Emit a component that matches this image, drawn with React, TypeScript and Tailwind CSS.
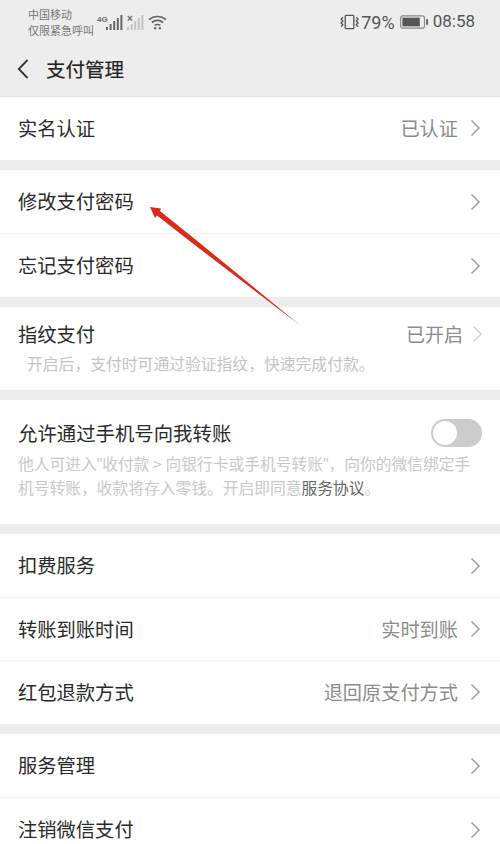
import React from "react";

const Chevron = ({ light = false }: { light?: boolean }) => (
  <svg width="11" height="18" viewBox="0 0 11 18" fill="none" className="shrink-0">
    <path d="M1.5 1.5 L9 9 L1.5 16.5" stroke={light ? "#d4d4d4" : "#a3a3a3"} strokeWidth="1.6" />
  </svg>
);

const Row = ({ label, value, h = "h-[63px]", border = false }: { label: string; value?: string; h?: string; border?: boolean }) => (
  <div className={`${h} flex items-center justify-between pl-[18px] pr-[19px] bg-white ${border ? "border-b border-[#f3f3f3]" : ""}`}>
    <span className="text-[19.3px] text-[#2a2a2a]">{label}</span>
    <span className="flex items-center gap-[12px]">
      {value && <span className="text-[19.2px] text-[#8c8c8c]">{value}</span>}
      <Chevron />
    </span>
  </div>
);

const Bars = ({ dim = false }: { dim?: boolean }) => (
  <svg width="18" height="15" viewBox="0 0 18 15">
    {[3, 6, 9, 12, 15].map((b, i) => (
      <rect key={i} x={i * 3.6} y={15 - b} width="2" height={b} fill={dim ? "#c4c4c4" : "#666"} />
    ))}
  </svg>
);

export default function App() {
  return (
    <div className="relative w-[500px] h-[844px] overflow-hidden bg-[#ededed] font-['Noto_Sans_CJK_SC','Noto_Sans',sans-serif]">
      <div className="h-[44px] flex items-center justify-between pl-[28px] pr-[25px] text-[#666]">
        <div className="flex items-center">
          <div className="text-[11px] leading-[16px] text-[#777] w-[69px] whitespace-nowrap">
            <div>中国移动</div>
            <div>仅限紧急呼叫</div>
          </div>
          <div className="flex items-end">
            <span className="w-[9px] text-[8px] font-bold leading-none self-start mt-[1px] font-['Liberation_Sans',sans-serif]">4G</span>
            <Bars />
          </div>
          <div className="relative ml-[3px] flex items-end">
            <span className="absolute left-0 -top-[1px] text-[10px] font-bold leading-none text-[#666] font-['Liberation_Sans',sans-serif]">×</span>
            <Bars dim />
          </div>
          <svg width="19" height="15" viewBox="0 0 20 16" fill="none" className="ml-[3px]" stroke="#666" strokeWidth="1.8">
            <path d="M1 5 C6 0.5 14 0.5 19 5" />
            <path d="M4 8 C7.5 5 12.5 5 16 8" />
            <path d="M7 11 C8.5 9.8 11.5 9.8 13 11" />
            <circle cx="7.5" cy="14" r="1.3" fill="#666" stroke="none" />
            <circle cx="12.5" cy="14" r="1.3" fill="#666" stroke="none" />
          </svg>
        </div>
        <div className="flex items-center font-['Roboto',sans-serif] text-[18px] text-[#555]">
          <svg width="20" height="16" viewBox="0 0 21 16" fill="none" stroke="#555" strokeWidth="1.4">
            <rect x="5.5" y="1" width="9" height="14" rx="1" />
            <path d="M3 3 L1.2 5 L3 7 L1.2 9 L3 11 L1.2 13" />
            <path d="M17 3 L19 5 L17 7 L19 9 L17 11 L19 13" />
          </svg>
          <span className="ml-[1px]">79%</span>
          <svg width="29" height="14" viewBox="0 0 30 14" className="ml-[5px]">
            <rect x="0.7" y="0.7" width="24.6" height="12.6" rx="2" fill="none" stroke="#888" strokeWidth="1.2" />
            <rect x="2.5" y="2.5" width="18" height="9" fill="#555" />
            <rect x="27" y="4" width="2" height="6" fill="#666" />
          </svg>
          <span className="ml-[4px] text-[17px]">08:58</span>
        </div>
      </div>

      <div className="h-[52px] flex items-center pl-[17px] pb-[2px]">
        <svg width="12" height="20" viewBox="0 0 12 20" fill="none">
          <path d="M10.5 1 L1.8 10 L10.5 19" stroke="#333" strokeWidth="1.8" />
        </svg>
        <span className="ml-[17px] text-[19.5px] text-[#222]" style={{ WebkitTextStroke: "0.2px #222" }}>支付管理</span>
      </div>

      <div className="border-t border-[#e4e4e4]">
        <Row label="实名认证" value="已认证" />
      </div>

      <div className="mt-[10px]">
        <Row label="修改支付密码" h="h-[64px]" border />
        <Row label="忘记支付密码" />
      </div>

      <div className="mt-[10px] h-[83px] bg-white pl-[18px] pr-[17px] pt-[9px]">
        <div className="flex items-center justify-between h-[36px]">
          <span className="text-[19.3px] text-[#2a2a2a]">指纹支付</span>
          <span className="flex items-center gap-[9px]">
            <span className="text-[19px] text-[#8c8c8c]">已开启</span>
            <Chevron light />
          </span>
        </div>
        <div className="pl-[9px] text-[15.8px] leading-[24px] text-[#c4c4c4] whitespace-nowrap">开启后，支付时可通过验证指纹，快速完成付款。</div>
      </div>

      <div className="mt-[10px] h-[124px] bg-white pl-[18px] pr-[18px] pt-[14px]">
        <div className="flex items-center justify-between h-[37px]">
          <span className="text-[19.4px] text-[#2a2a2a]">允许通过手机号向我转账</span>
          <div className="w-[51px] h-[28px] rounded-full bg-[#cccccc] p-[2px]">
            <div className="w-[24px] h-[24px] rounded-full bg-white" />
          </div>
        </div>
        <div className="mt-[1px] text-[15.75px] leading-[23px] text-[#c9c9c9] whitespace-nowrap">
          <div>他人可进入<span className="font-['Liberation_Sans',sans-serif]">"</span>收付款 &gt; 向银行卡或手机号转账<span className="font-['Liberation_Sans',sans-serif]">"</span>，向你的微信绑定手</div>
          <div>机号转账，收款将存入零钱。开启即同意<span className="text-[#666]">服务协议</span>。</div>
        </div>
      </div>

      <div className="mt-[10px]">
        <Row label="扣费服务" h="h-[64px]" border />
        <Row label="转账到账时间" value="实时到账" h="h-[63px]" border />
        <Row label="红包退款方式" value="退回原支付方式" />
      </div>

      <div className="mt-[10px]">
        <Row label="服务管理" h="h-[64px]" border />
        <Row label="注销微信支付" />
      </div>

      <svg width="500" height="844" viewBox="0 0 500 844" className="absolute inset-0 pointer-events-none">
        <polygon points="150,207 161,208.5 160,211 201,244 301,326 196,246 157,215.5 155,218" fill="#dc2a1c" />
      </svg>
    </div>
  );
}
